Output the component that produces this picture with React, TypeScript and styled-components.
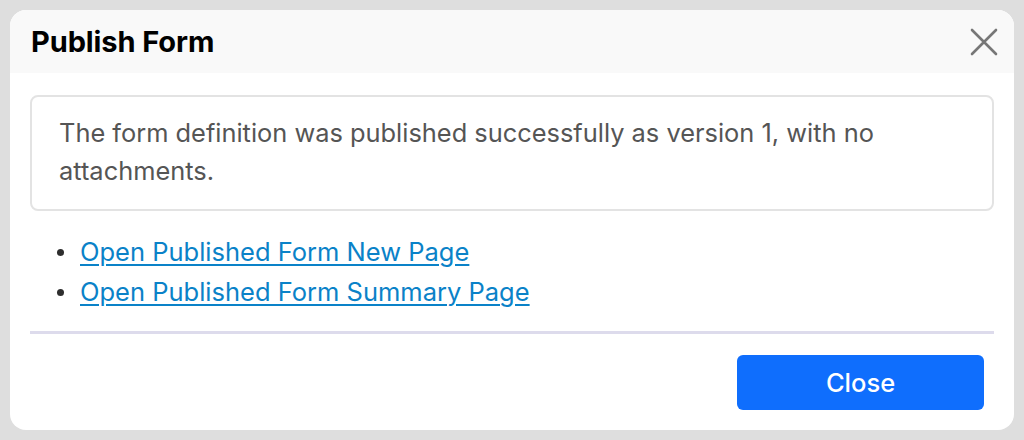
import styled, { createGlobalStyle } from 'styled-components';

const GlobalStyle = createGlobalStyle`
    html, body {
        margin: 0;
        padding: 0;
        background: #dedede;
        font-family: Inter, "Noto Sans", "Liberation Sans", sans-serif;
    }
`;

const Backdrop = styled.div`
    width: 1024px;
    height: 440px;
    padding: 10px;
    box-sizing: border-box;
`;

const Dialog = styled.div`
    width: 1004px;
    height: 420px;
    background: #ffffff;
    border-radius: 16px;
    overflow: hidden;
    display: flex;
    flex-direction: column;
`;

const Header = styled.div`
    height: 63px;
    background: #f9f9f9;
    display: flex;
    align-items: center;
    justify-content: space-between;
    padding: 0 14px 0 21px;
    box-sizing: border-box;
`;

const Title = styled.h2`
    margin: 0;
    font-size: 29px;
    font-weight: 700;
    color: #000;
    letter-spacing: -0.1px;
`;

const CloseIcon = styled.button`
    width: 32px;
    height: 32px;
    border: none;
    background: none;
    padding: 0;
    display: flex;
    align-items: center;
    justify-content: center;
    cursor: pointer;
`;

const Body = styled.div`
    padding: 22px 20px 0 20px;
    display: flex;
    flex-direction: column;
`;

const Message = styled.div`
    border: 2px solid #e3e3e3;
    border-radius: 8px;
    padding: 17px 27px 19px 27px;
    font-size: 25.4px;
    line-height: 38px;
    color: #555555;
`;

const LinkList = styled.ul`
    margin: 21px 0 0 0;
    padding: 0 0 0 27px;
    list-style: none;
    font-size: 25.5px;
    line-height: 40px;
`;

const LinkItem = styled.li`
    display: flex;
    align-items: center;

    &::before {
        content: '';
        width: 7px;
        height: 7px;
        border-radius: 50%;
        background: #2e2e2e;
        margin-right: 16px;
        flex-shrink: 0;
    }
`;

const PageLink = styled.a`
    color: #0a82c8;
    text-decoration: underline;
    text-underline-offset: 3px;
    text-decoration-thickness: 2px;
`;

const Divider = styled.hr`
    border: none;
    height: 3px;
    background: #dddbec;
    margin: 19px 0 0 0;
`;

const Footer = styled.div`
    display: flex;
    justify-content: flex-end;
    padding: 21px 30px 0 20px;
`;

const PrimaryButton = styled.button`
    width: 247px;
    height: 55px;
    background: #0f6efd;
    border: none;
    border-radius: 6px;
    color: #ffffff;
    font-family: inherit;
    font-size: 25.5px;
    font-weight: 500;
    cursor: pointer;
`;

export default function App() {
    return (
        <>
            <GlobalStyle />
            <Backdrop>
                <Dialog>
                    <Header>
                        <Title>Publish Form</Title>
                        <CloseIcon aria-label="Close">
                            <svg width="28" height="28" viewBox="0 0 28 28">
                                <path d="M2 2 L26 26 M26 2 L2 26" stroke="#777777" strokeWidth="2.6" strokeLinecap="round" />
                            </svg>
                        </CloseIcon>
                    </Header>
                    <Body>
                        <Message>
                            The form definition was published successfully as version 1, with no attachments.
                        </Message>
                        <LinkList>
                            <LinkItem><PageLink href="#">Open Published Form New Page</PageLink></LinkItem>
                            <LinkItem><PageLink href="#">Open Published Form Summary Page</PageLink></LinkItem>
                        </LinkList>
                        <Divider />
                    </Body>
                    <Footer>
                        <PrimaryButton>Close</PrimaryButton>
                    </Footer>
                </Dialog>
            </Backdrop>
        </>
    );
}
